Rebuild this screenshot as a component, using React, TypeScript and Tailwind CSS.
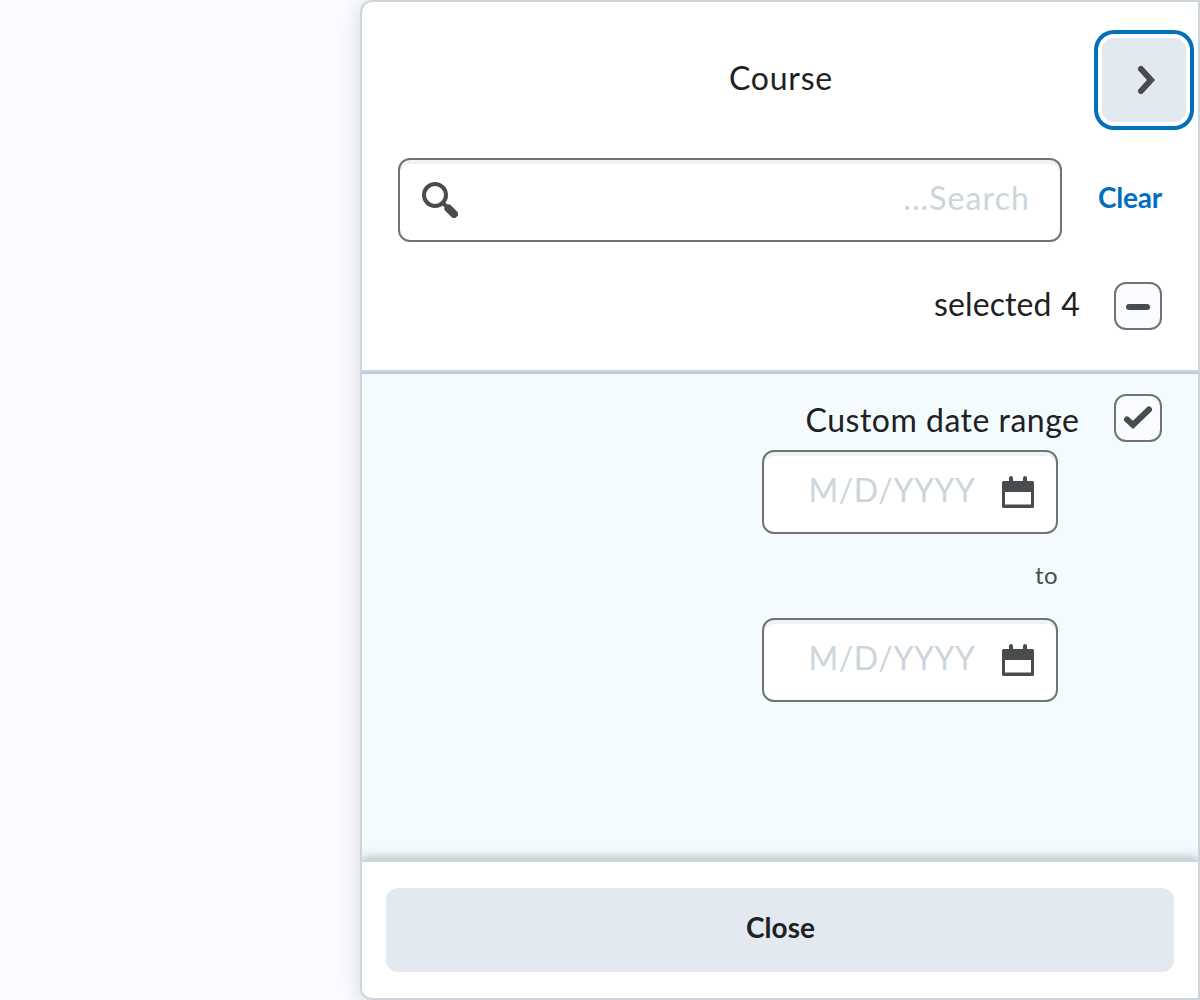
import React from "react";

function SearchIcon() {
  return (
    <svg width="36" height="36" viewBox="0 0 36 36" fill="none">
      <circle cx="13" cy="13" r="11" stroke="#494c4e" strokeWidth="4" />
      <path d="M20.5 20.5L25 25" stroke="#494c4e" strokeWidth="4" />
      <path d="M26.5 26.5L32 32" stroke="#494c4e" strokeWidth="8" strokeLinecap="round" />
    </svg>
  );
}

function CalendarIcon() {
  return (
    <svg width="32" height="32" viewBox="0 0 32 32" fill="#494c4e">
      <path
        fillRule="evenodd"
        d="M7 2a2 2 0 0 1 4 0v3h10V2a2 2 0 0 1 4 0v3h5.500a1.500 1.500 0 0 1 1.500 1.500v24a1.500 1.500 0 0 1-1.500 1.500h-29A1.500 1.500 0 0 1 0 30.500v-24A1.500 1.500 0 0 1 1.500 5H7zM3 16v12.500h26V16z"
      />
    </svg>
  );
}

function Checkbox({ checked }: { checked?: boolean }) {
  return (
    <div
      role="checkbox"
      aria-checked={checked ? "true" : "mixed"}
      className="flex size-12 shrink-0 items-center justify-center rounded-xl border-2 border-[#6e7477] bg-[#f9fbff]"
    >
      <svg width="44" height="44" viewBox="0 0 44 44" fill="none" stroke="#494c4e" strokeWidth="6" strokeLinecap="round">
        {checked ? <path d="M11 23.500L17 29L33 13.500" strokeLinejoin="miter" /> : <path d="M13 23H31" />}
      </svg>
    </div>
  );
}

function DateField() {
  return (
    <div className="flex h-[84px] w-[296px] items-center justify-end gap-[26.5px] rounded-xl border-2 border-[#6e7477] bg-white pr-[22px] shadow-[inset_0_4px_0_0_#f1f2f3]">
      <span className="-mt-1 text-[32px] leading-[48px] tracking-[0.55px] text-[#cdd5dc]">M/D/YYYY</span>
      <CalendarIcon />
    </div>
  );
}

export default function App() {
  return (
    <div className="flex h-[1000px] w-[1200px] justify-end overflow-hidden bg-[#fbfcff] font-['Lato',sans-serif] text-[#202122]">
      <main className="flex h-[1000px] w-[840px] flex-col overflow-hidden rounded-l-xl border-2 border-[#cdd5dc] bg-white shadow-[0_4px_24px_rgba(0,0,0,0.15)]">
        <header className="h-[370px] shrink-0 border-b-2 border-[#cdd5dc]">
          <div className="grid h-[156px] grid-cols-[108px_1fr_108px] items-center">
            <h1 className="col-start-2 pb-1 pl-0.5 text-center text-[32px] leading-[48px] tracking-[0.8px]">Course</h1>
            <button
              aria-label="Back"
              className="ml-3 flex size-[84px] items-center justify-center rounded-xl bg-[#e3e9f1] shadow-[0_0_0_4px_#ffffff,0_0_0_8px_#006fbf]"
            >
              <svg width="36" height="36" viewBox="0 0 36 36" fill="none" stroke="#494c4e" strokeWidth="6" strokeLinecap="round" strokeLinejoin="miter">
                <path d="M15 7L25 18L15 29" />
              </svg>
            </button>
          </div>
          <div className="flex items-center justify-between pr-9 pl-9">
            <div className="flex h-[84px] w-[664px] items-center justify-between rounded-xl border-2 border-[#6e7477] pr-[30px] pl-[22px] shadow-[inset_0_4px_0_0_#f1f2f3]">
              <SearchIcon />
              <span className="-mt-1 text-[32px] leading-[48px] tracking-[1.1px] text-[#cdd5dc]">...Search</span>
            </div>
            <a className="-mt-1.5 text-[28px] leading-[40px] font-bold tracking-[-0.2px] text-[#006fbf]">Clear</a>
          </div>
          <div className="mt-10 flex items-center justify-end gap-[34px] pr-9">
            <span className="-mt-1 text-[32px] leading-[48px] tracking-[0.1px] [word-spacing:1.5px]">selected 4</span>
            <Checkbox />
          </div>
        </header>
        <section className="flex h-[488px] shrink-0 flex-col items-end border-t-2 border-[#b5cce4] bg-[#f3fbff] pt-5 pr-9">
          <div className="flex items-center gap-[34.5px]">
            <span className="mt-0.5 -mb-0.5 text-[32px] leading-[48px] tracking-[0.5px]">Custom date range</span>
            <Checkbox checked />
          </div>
          <div className="mt-2 mr-[104px] flex flex-col items-end">
            <DateField />
            <div className="flex h-[84px] items-center pb-0.5 text-2xl tracking-[0.4px] text-[#494c4e]">to</div>
            <DateField />
          </div>
        </section>
        <footer className="h-[138px] shrink-0 border-t-2 border-[#cdd5dc] bg-white px-6 pt-[26px] shadow-[0_-2px_10px_rgba(73,76,78,0.4)]">
          <button className="flex h-[84px] w-full items-center justify-center rounded-xl bg-[#e3e9f1] pb-1.5 pl-px text-[28px] font-bold">
            Close
          </button>
        </footer>
      </main>
    </div>
  );
}
